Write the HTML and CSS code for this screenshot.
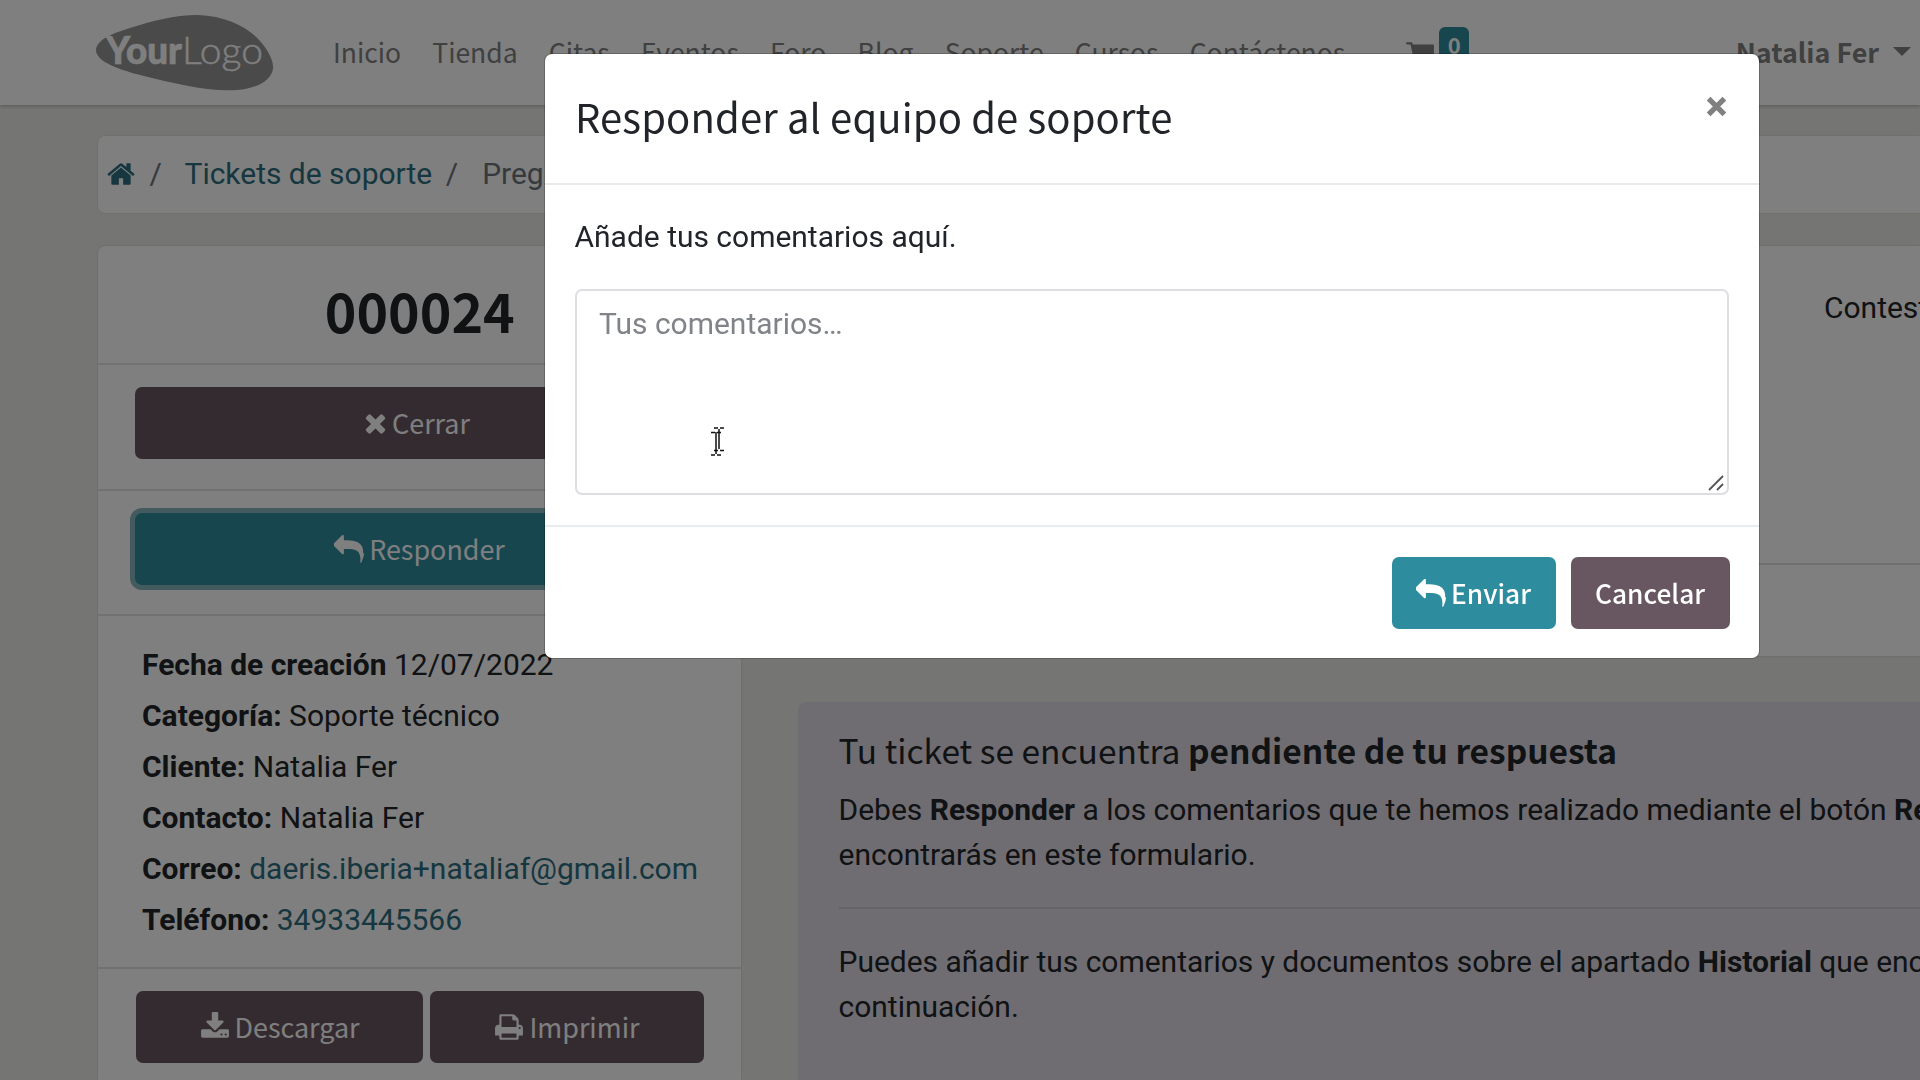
FILE: index.html
```html
<!DOCTYPE html>
<html lang="es">
<head>
<meta charset="utf-8">
<title>Tickets de soporte</title>
<link rel="stylesheet" href="styles.css">
</head>
<body>
<svg class="sprite" aria-hidden="true">
  <symbol id="home" viewBox="0 0 1792 1792"><path d="M1472 992v480q0 26-19 45t-45 19h-384v-384h-256v384h-384q-26 0-45-19t-19-45v-480q0-1 .5-3t.5-3l575-474 575 474q1 2 1 6zm223-69l-62 74q-8 9-21 11h-3q-13 0-21-7l-692-577-692 577q-12 8-24 7-13-2-21-11l-62-74q-8-10-7-23.5t11-21.5l719-599q32-26 76-26t76 26l244 204v-195q0-14 9-23t23-9h192q14 0 23 9t9 23v408l219 182q10 8 11 21.5t-7 23.5z"/></symbol>
  <symbol id="reply" viewBox="0 0 1792 1792"><path d="M1792 1120q0 166-127 451-3 7-10.5 24t-13.5 30-13 22q-12 17-28 17-15 0-23.5-10t-8.5-25q0-9 2.5-26.5t2.5-23.5q5-68 5-123 0-112-19.5-200.5t-54.5-153.5-90-112-116.5-78.5-143.5-49-164.5-25.5-175.5-7h-224v256q0 26-19 45t-45 19-45-19l-512-512q-19-19-19-45t19-45l512-512q19-19 45-19t45 19 19 45v256h224q713 0 875 403 53 134 53 333z"/></symbol>
  <symbol id="times" viewBox="192 0 1408 1792"><path d="M1490 1322q0 40-28 68l-136 136q-28 28-68 28t-68-28l-294-294-294 294q-28 28-68 28t-68-28l-136-136q-28-28-28-68t28-68l294-294-294-294q-28-28-28-68t28-68l136-136q28-28 68-28t68 28l294 294 294-294q28-28 68-28t68 28l136 136q28 28 28 68t-28 68l-294 294 294 294q28 28 28 68z"/></symbol>
  <symbol id="download" viewBox="0 0 1792 1792"><path d="M1344 1344q0-26-19-45t-45-19-45 19-19 45 19 45 45 19 45-19 19-45zm256 0q0-26-19-45t-45-19-45 19-19 45 19 45 45 19 45-19 19-45zm128-224v320q0 40-28 68t-68 28h-1472q-40 0-68-28t-28-68v-320q0-40 28-68t68-28h465l135 136q58 56 136 56t136-56l136-136h464q40 0 68 28t28 68zm-325-569q17 41-14 70l-448 448q-18 19-45 19t-45-19l-448-448q-31-29-14-70 17-39 59-39h256v-448q0-26 19-45t45-19h256q26 0 45 19t19 45v448h256q42 0 59 39z"/></symbol>
  <symbol id="print" viewBox="0 0 1792 1792"><path d="M448 1536h896v-256h-896v256zm0-640h896v-384h-160q-40 0-68-28t-28-68v-160h-640v640zm1152 64q0-26-19-45t-45-19-45 19-19 45 19 45 45 19 45-19 19-45zm128 0v416q0 13-9.5 22.5t-22.5 9.5h-224v160q0 40-28 68t-68 28h-960q-40 0-68-28t-28-68v-160h-224q-13 0-22.5-9.5t-9.5-22.5v-416q0-79 56.5-135.5t135.5-56.5h64v-544q0-40 28-68t68-28h672q40 0 88 20t76 48l152 152q28 28 48 76t20 88v256h64q79 0 135.5 56.5t56.5 135.5z"/></symbol>
  <symbol id="cart" viewBox="0 0 1792 1792"><path d="M704 1536q0 52-38 90t-90 38-90-38-38-90 38-90 90-38 90 38 38 90zm896 0q0 52-38 90t-90 38-90-38-38-90 38-90 90-38 90 38 38 90zm128-1088v512q0 24-16.5 42.5t-40.5 21.5l-1044 122q13 60 13 70 0 16-24 64h920q26 0 45 19t19 45-19 45-45 19h-1024q-26 0-45-19t-19-45q0-11 8-31.5t16-36 21.5-40 15.5-29.5l-177-823h-204q-26 0-45-19t-19-45 19-45 45-19h256q16 0 28.5 6.5t19.5 15.5 13 24.5 8 26 5.5 29.5 4.5 26h1201q26 0 45 19t19 45z"/></symbol>
</svg>

<header class="topbar">
  <svg class="logo" viewBox="0 0 178 76" role="img" aria-label="YourLogo">
    <path class="logo-shape" d="M0 35C1 24 18 18 34 13C56 6 78 0 102 0C130 1 152 12 164 26C173 36 178 47 177 54C175 65 163 73 141 75C112 77 77 68 48 61C24 55 0 47 0 35Z"/>
    <text class="logo-bold" x="10" y="48.500" textLength="76" lengthAdjust="spacingAndGlyphs">Your</text>
    <text class="logo-light" x="86" y="48.500" textLength="81" lengthAdjust="spacingAndGlyphs">Logo</text>
  </svg>
  <nav class="menu">
    <a>Inicio</a><a>Tienda</a><a>Citas</a><a>Eventos</a><a>Foro</a><a>Blog</a><a>Soporte</a><a>Cursos</a><a>Contáctenos</a>
  </nav>
  <div class="cart"><svg class="icon"><use href="#cart"/></svg><span class="badge">0</span></div>
  <div class="user"><b>Natalia Fer</b><span class="caret"></span></div>
</header>

<main class="page">
  <nav class="breadcrumb">
    <svg class="icon"><use href="#home"/></svg><span class="sep">/</span><a class="link">Tickets de soporte</a><span class="sep">/</span><span class="current">Pregunta</span>
  </nav>
  <div class="columns">
    <aside class="card sidebar">
      <div class="row number"><h2>000024</h2></div>
      <div class="row action"><button class="btn dark close-ticket"><svg class="icon times"><use href="#times"/></svg><span>Cerrar</span></button></div>
      <div class="row action"><button class="btn teal focused"><svg class="icon reply"><use href="#reply"/></svg><span>Responder</span></button></div>
      <div class="row details">
        <div><b>Fecha de creación</b> 12/07/2022</div>
        <div><b>Categoría:</b> Soporte técnico</div>
        <div><b>Cliente:</b> Natalia Fer</div>
        <div><b>Contacto:</b> Natalia Fer</div>
        <div><b>Correo:</b> <a class="link">daeris.iberia+nataliaf@gmail.com</a></div>
        <div><b>Teléfono:</b> <a class="link">34933445566</a></div>
      </div>
      <div class="row tools">
        <button class="btn dark download"><svg class="icon"><use href="#download"/></svg><span>Descargar</span></button>
        <button class="btn dark print"><svg class="icon"><use href="#print"/></svg><span>Imprimir</span></button>
      </div>
    </aside>
    <section class="content">
      <div class="card ticket">
        <div class="ticket-status">Contestado</div>
        <div class="ticket-foot"></div>
      </div>
      <div class="alert">
        <h4>Tu ticket se encuentra <b>pendiente de tu respuesta</b></h4>
        <p>Debes <b>Responder</b> a los comentarios que te hemos realizado mediante el botón <b>Responder</b><br>encontrarás en este formulario.</p>
        <hr>
        <p>Puedes añadir tus comentarios y documentos sobre el apartado <b>Historial</b> que encontrarás a<br>continuación.</p>
      </div>
    </section>
  </div>
</main>

<div class="backdrop">
  <div class="modal" role="dialog">
    <div class="modal-header"><h3>Responder al equipo de soporte</h3>
      <svg class="close" viewBox="0 0 20 20"><path d="M2.500 2.500L17.500 17.500M17.500 2.500L2.500 17.500"/></svg></div>
    <div class="modal-body">
      <p>Añade tus comentarios aquí.</p>
      <div class="field">
        <textarea placeholder="Tus comentarios…"></textarea>
        <svg class="grip" viewBox="0 0 16 16"><path d="M1 15L15 1M9 15L15 9"/></svg>
        <svg class="cursor" viewBox="0 0 14 30"><path d="M1 6.500h4M7 6.500h4M4 2h4M10 2h4M6 6v20M9 3v20M4 24.500h4M10 24.500h4M1 29h4M7 29h4M6 25v3"/></svg>
      </div>
    </div>
    <div class="modal-footer">
      <button class="btn teal send"><svg class="icon reply"><use href="#reply"/></svg><span>Enviar</span></button>
      <button class="btn dark cancel"><span>Cancelar</span></button>
    </div>
  </div>
</div>
</body>
</html>
```
FILE: styles.css
```css
* { box-sizing: border-box; }
html, body { height: 100%; }
body {
  margin: 0;
  overflow: hidden;
  background: #ebebe6;
  color: #212529;
  font: 29.97px/45px Roboto, sans-serif;
}
h2, h3, h4, p { margin: 0; }
h2, h3, h4, .menu, .user, .btn, .badge { font-family: "Noto Sans CJK SC", "Noto Sans", sans-serif; }
b { font-weight: 700; }
.sprite { position: absolute; width: 0; height: 0; }
.icon { width: 30px; height: 30px; fill: currentColor; flex: none; }
.link { color: #2c6e7e; }

/* Top bar */
.topbar {
  display: flex;
  align-items: center;
  height: 105px;
  padding-left: 96px;
  background: #fff;
  color: #808080;
  font-size: 26.5px;
  box-shadow: 0 1px 4px rgba(0, 0, 0, .25);
  position: relative;
}
.logo { width: 178px; height: 76px; flex: none; }
.logo-shape { fill: #949494; }
.logo-bold, .logo-light { fill: #fff; font-family: Lato, sans-serif; font-size: 38px; }
.logo-bold { font-weight: 900; stroke: #fff; stroke-width: .6; }
.logo-light { font-weight: 300; stroke: #fff; stroke-width: .4; }
.menu { display: flex; gap: 31.2px; margin-left: 59px; padding-bottom: 2px; white-space: nowrap; }
.cart { display: flex; margin-left: 60px; gap: 4px; height: 30px; }
.badge {
  width: 30px; height: 42px;
  margin-top: -11px;
  border-radius: 6px;
  background: #2e8c9f;
  color: #fff;
  font-size: 22px; line-height: 34px; font-weight: 700;
  text-align: center;
}
.user { display: flex; align-items: center; gap: 14px; margin-left: auto; padding: 0 9px 2px 0; font-size: 26.9px; white-space: nowrap; }
.caret { border: 9px solid transparent; border-top-color: currentColor; border-bottom: 0; }

/* Page */
.page { padding: 31px 0 0 97.5px; }
.breadcrumb {
  display: flex;
  align-items: center;
  height: 77px;
  padding: 0 0 2px 8.5px;
  border-radius: 7px 0 0 7px;
  background: #fff;
  box-shadow: 0 0 2px rgba(0, 0, 0, .15);
}
.breadcrumb .icon { fill: #2c6e7e; }
.sep { width: 48.5px; padding-left: 13.5px; color: #6c757d; }
.current { padding-left: 1.5px; color: #6c757d; }
.columns { display: flex; gap: 56.5px; margin-top: 33px; }
.card { background: #fff; border-radius: 7px; box-shadow: 0 0 2px rgba(0, 0, 0, .2); }
.sidebar { width: 643.5px; height: 834px; flex: none; border-radius: 7px 7px 0 0; }
.row { border-bottom: 2px solid #e2e2e2; }
.number { height: 119px; padding: 27px 0 0 1px; }
.number h2 { font-size: 53.7px; line-height: 74px; text-align: center; }
.action { height: 125px; padding: 22px 37px 0 37.5px; }
.action:nth-child(2) { height: 126px; }
.btn {
  display: flex;
  align-items: center;
  justify-content: center;
  gap: 5px;
  height: 72px;
  padding: 0;
  border: 0;
  border-radius: 7px;
  color: #fff;
  font-size: 26.9px;
}
.btn span { padding-bottom: 1px; }
.btn .reply { margin-top: 2px; }
.action .btn { width: 100%; }
.action .close-ticket { padding-right: 5px; }
.dark { background: #685760; }
.teal { background: #2e8c9f; }
.times { width: 23px; }
.focused { box-shadow: 0 0 0 5px #86b5bf; }
.details { height: 353px; padding: 23px 0 0 44.5px; line-height: 51px; white-space: nowrap; }
.tools { display: flex; gap: 7px; padding: 22px 37px 0 38.5px; border: 0; }
.download { width: 287px; }
.print { width: 274px; }
.content { flex: 1; min-width: 0; }
.ticket { height: 410px; padding-top: 39px; margin-bottom: 46px; border-radius: 7px 0 0 7px; }
.ticket-status { height: 280px; padding-left: 1026.5px; border-bottom: 2px solid #dfdfdf; }
.alert {
  height: 378px;
  padding: 25px 0 0 41px;
  border-radius: 7px 0 0 0;
  background: #dfdbe4;
  white-space: nowrap;
}
.alert h4 { font-size: 33.5px; font-weight: 400; line-height: 45px; margin-bottom: 15px; }
.alert hr { margin: 30px 0; border: 0; border-top: 2px solid #cbc7d1; }

/* Modal */
.backdrop {
  position: fixed;
  inset: 0;
  padding: 54px 0 0 544.5px;
  background: rgba(0, 0, 0, .5);
}
.modal { width: 1214.5px; height: 604px; border-radius: 7px; background: #fff; box-shadow: 0 0 0 1px rgba(0, 0, 0, .2); }
.modal-header { display: flex; justify-content: space-between; height: 131px; padding: 32px 32px 0 30.5px; border-bottom: 2px solid #e9ecef; }
.modal-header h3 { font-size: 40px; letter-spacing: .12px; font-weight: 400; line-height: 61px; white-space: nowrap; }
.close { width: 21px; height: 21px; margin-top: 10px; stroke: #808080; stroke-width: 5; }
.modal-body { height: 342px; padding: 29px 30px 0; border-bottom: 2px solid #e9ecef; }
.field { position: relative; margin-top: 30px; }
textarea {
  display: block;
  width: 100%; height: 206px;
  padding: 10px 22.5px;
  border: 2px solid #dcdee1;
  border-radius: 7px;
  font: inherit;
  resize: none;
}
textarea::placeholder { color: #808388; }
.grip, .cursor { position: absolute; fill: none; }
.grip { right: 5px; bottom: 4px; width: 16px; height: 16px; stroke: #555; stroke-width: 1.8; }
.cursor { left: 135px; top: 137px; width: 14px; height: 30px; stroke: #111; stroke-width: 1.5; }
.modal-footer { display: flex; justify-content: flex-end; gap: 15px; padding: 29.5px 29.500px 0; }
.send { width: 164px; }
.cancel { width: 159px; }
.modal-footer .btn { font-size: 26.3px; font-weight: 500; }
```
